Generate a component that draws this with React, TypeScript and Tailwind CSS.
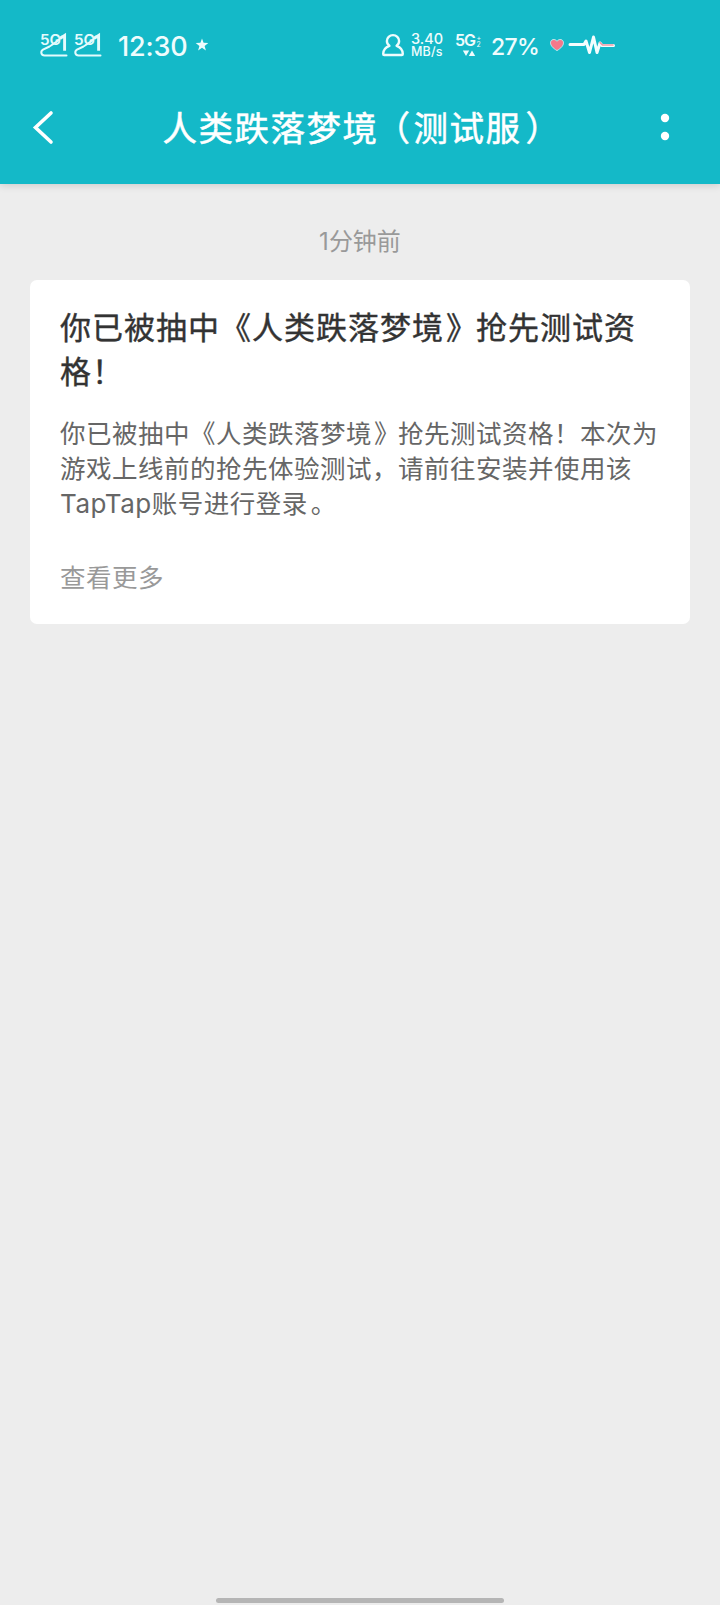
/* Message detail page: status bar, title bar and a single notification card. */

function SignalIcon({ className = '' }: { className?: string }) {
  return (
    <svg width="28" height="24" viewBox="0 0 28 24" fill="none" className={`overflow-visible ${className}`}>
      <text
        x="0"
        y="11.500"
        fontSize="14"
        fontWeight="600"
        fontFamily="Inter"
        fill="#e4fbfd"
        textLength="21"
        lengthAdjust="spacingAndGlyphs"
      >
        5G
      </text>
      <path
        d="M26.500 22.500H4.500C1 22.500.2 18.500 3 16.700L9.500 13.500C14 11 18.500 7.500 22 3.500"
        stroke="#e4fbfd"
        strokeWidth="2"
        strokeLinecap="round"
      />
      <path d="M20 5.500L24.600 2.500V17.800" stroke="#e4fbfd" strokeWidth="2.900" />
    </svg>
  );
}

function StatusBar() {
  return (
    <div className="flex h-[90px] items-center pl-[40px] text-[#effcfd]">
      <SignalIcon />
      <SignalIcon className="ml-[6px]" />
      <span className="ml-4 w-[70px] pt-[3px] whitespace-nowrap font-[Inter] text-[27px] leading-8 font-medium tracking-[-0.200px]">
        12:30
      </span>
      <svg width="14" height="14" viewBox="0 0 14 14" className="ml-[7px]">
        <path d="M7 .5l1.600 4.300 4.700.2-3.700 2.900 1.300 4.500L7 9.800l-3.900 2.600 1.300-4.500L.7 5l4.700-.2z" fill="currentColor" />
      </svg>

      <svg width="24" height="24" viewBox="0 0 24 24" fill="none" className="ml-[172px]">
        <path
          d="M8.400 12.800C6.700 11.600 5.900 9.900 5.900 8a6.100 5.900 0 0 1 12.200 0c0 1.900-.8 3.600-2.500 4.800 4.200 1.500 6.200 4.500 6.200 8.200 0 .7-.4 1-1 1H3.200c-.6 0-1-.3-1-1 0-3.700 2-6.700 6.200-8.200z"
          stroke="currentColor"
          strokeWidth="2.400"
          strokeLinejoin="round"
        />
      </svg>
      <div className="ml-[6px] flex w-[34px] flex-col whitespace-nowrap font-[Inter] font-medium">
        <span className="text-[14.500px] leading-[13px]">3.40</span>
        <span className="text-[12.500px] leading-[13px] tracking-[0.200px]">MB/s</span>
      </div>
      <svg width="28" height="26" viewBox="0 0 28 26" fill="currentColor" className="ml-[10px] overflow-visible">
        <text x="0" y="14" fontSize="16" fontWeight="600" fontFamily="Inter" textLength="21">
          5G
        </text>
        <text x="21.500" y="8" fontSize="7" fontFamily="Inter">
          +
        </text>
        <text x="21.500" y="14.500" fontSize="7" fontFamily="Inter">
          2
        </text>
        <path d="M7.800 18.500h6.400l-3.200 5.500zM13.800 24l3.200-5.500 3.200 5.500z" />
      </svg>
      <span className="ml-[8px] w-[48px] pt-[3px] whitespace-nowrap font-[Inter] text-[23px] leading-8 font-medium tracking-[-0.700px]">
        27%
      </span>
      <svg width="16" height="14" viewBox="0 0 16 14" className="ml-[10px]">
        <path
          d="M8 12.600C4 10.200 1.500 7.600 1.500 4.800c0-3.600 4.600-4.500 6.500-1.500 1.900-3 6.500-2.100 6.500 1.500 0 2.800-2.500 5.400-6.500 7.800z"
          fill="#f4788b"
          stroke="#bfe9ee"
          strokeWidth="1"
        />
      </svg>
      <svg width="48" height="22" viewBox="0 0 48 22" fill="none" className="ml-[3px]">
        <path
          d="M2 10.500H16L18 7l3.500 11.500L25.500 3l3.500 15.500L32 9l2 2.500H45.500"
          stroke="#f4fdfe"
          strokeWidth="3"
          strokeLinecap="round"
          strokeLinejoin="round"
        />
        <path d="M32 8.500l2.500 2.500H45" stroke="#f09aa6" strokeWidth="1.600" strokeLinecap="round" />
      </svg>
    </div>
  );
}

function TitleBar() {
  return (
    <div className="flex h-[94px] items-start justify-between pt-[15px] pr-[48px] pl-[32px] text-white">
      <svg width="24" height="46" viewBox="0 0 24 46" fill="none">
        <path d="M19 8L3.500 22.500 19 37" stroke="currentColor" strokeWidth="3.600" strokeLinecap="round" />
      </svg>
      <h1 className="-mt-[2px] pl-[6px] text-[34.500px] leading-[46px] font-normal tracking-[1.500px] whitespace-nowrap [-webkit-text-stroke:0.500px_white]">
        人类跌落梦境
        <span className="mr-[2px] -ml-[3px]">（</span>
        测试服
        <span className="-mr-[4px] ml-[4px]">）</span>
      </h1>
      <svg width="14" height="46" viewBox="0 0 14 46" fill="currentColor">
        <circle cx="7" cy="13" r="4.200" />
        <circle cx="7" cy="31" r="4.200" />
      </svg>
    </div>
  );
}

function MessageCard() {
  return (
    <article className="mx-[30px] h-[344px] rounded-[7px] bg-white px-[30px] pt-[24px]">
      <h2 className="text-[31px] leading-[43.500px] font-normal tracking-[1px] whitespace-nowrap text-[#333] [-webkit-text-stroke:0.400px_#333]">
        <span className="block">
          你已被抽中《人类跌落梦境<span className="-mr-[2px] ml-[2px]">》</span>抢先测试资
        </span>
        <span className="block">格！</span>
      </h2>
      <p className="mt-[23px] text-[25.500px] leading-[35px] tracking-[0.500px] whitespace-nowrap text-[#666]">
        <span className="block">
          你已被抽中《人类跌落梦境<span className="-mr-[2px] ml-[2px]">》</span>抢先测试资格！本次为
        </span>
        <span className="block">游戏上线前的抢先体验测试，请前往安装并使用该</span>
        <span className="block">
          <span className="font-[Inter] text-[26px]">TapTap</span>账号进行登录<span className="ml-[3px]">。</span>
        </span>
      </p>
      <a className="mt-[37px] block text-[25.500px] leading-[35px] tracking-[0.500px] text-[#999]">查看更多</a>
    </article>
  );
}

export default function App() {
  return (
    <div className="flex h-[1605px] w-[720px] flex-col overflow-hidden bg-[#ededed] font-['Noto_Sans_CJK_SC',sans-serif]">
      <header className="bg-[#14b9c8] shadow-[0_1px_8px_rgba(0,0,0,0.160)]">
        <StatusBar />
        <TitleBar />
      </header>
      <main className="flex-1">
        <p className="h-[96px] pt-[39px] text-center text-[24px] leading-[34px] text-[#999]">
          <span className="font-[Inter]">1</span>分钟前
        </p>
        <MessageCard />
      </main>
      <div className="mx-auto mb-[2px] h-[5px] w-[288px] rounded-full bg-[#b5b5b5]" />
    </div>
  );
}
